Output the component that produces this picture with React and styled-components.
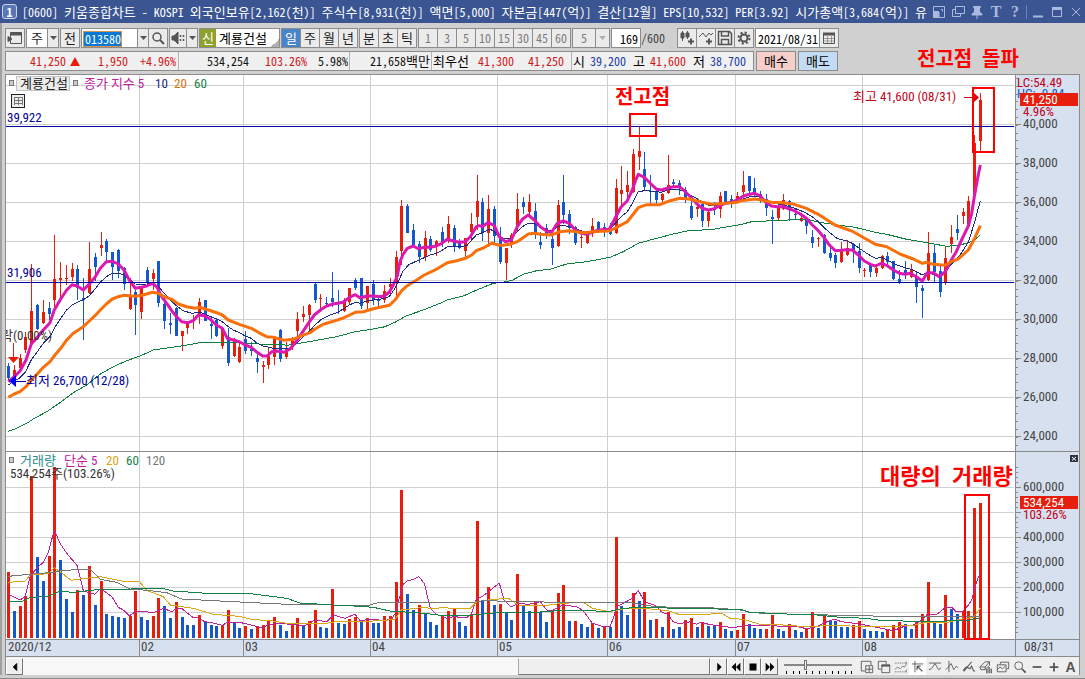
import React from 'react';
import styled, { createGlobalStyle } from 'styled-components';

const RED = '#e81e0c';
const BLUE = '#1458cc';

const FIRST_X = 7;
const STEP = 972 / 168;

// kind, high, body top, body bottom, low (thirds of a unit under `base`)
const candleRuns = [
  {
    base: 200,
    rows: `B490,498,534,540 R496,510,532,540 R462,475,505,515 R395,410,450,460 R192,333,430,440 B312,315,388,390
      R300,337,368,372 B305,325,342,360 R105,238,300,325 R186,234,240,305 R195,234,238,255 R190,207,230,242
      B195,207,265,300 B235,294,300,420 R125,208,280,282 B160,171,200,242 R97,135,143,167 B118,123,155,185
      B155,157,200,240 B147,149,212,235 B200,205,253,270 R235,285,328,330 B270,276,316,405 R258,260,337,358
      B200,210,247,255 R208,218,236,270 B183,184,308,322 B285,313,362,388 B340,370,374,402 B322,324,407,408
      R392,393,408,452 R365,368,383,402 R345,360,363,388 R295,305,345,372 B300,301,362,362 B352,373,377,417
      B357,360,408,410 R380,385,437,447 B385,412,488,497 R413,417,467,470 R430,440,487,488 B393,417,452,463
      B425,448,454,467 B455,473,487,518 R483,495,500,550`,
  },
  {
    base: 160,
    rows: `R562,587,615,626 R530,538,590,614 B507,510,597,605 R545,563,590,597 R530,535,560,570 R457,478,512,540
      R438,462,470,485 R432,435,465,515 B368,372,420,428 R402,413,417,447 B411,428,431,442 B336,415,426,440
      B390,425,430,462 R415,420,452,456 R384,385,427,433 B354,360,385,390 B354,355,437,448 R377,378,428,457
      B361,373,420,435 B415,418,424,447 R375,393,420,430 R354,372,382,408 R273,290,370,412 R121,138,272,316
      B133,138,218,218 B192,210,256,262 B243,252,290,310 R213,234,290,303 B228,236,270,276 R240,243,256,287
      B200,216,245,262 R168,192,243,250 B195,205,262,275 B237,247,265,267 R233,235,272,290 R158,192,215,240
      R45,123,170,210 B115,126,218,242 R104,147,218,260 B139,147,227,250 B201,235,305,311`,
  },
  {
    base: 80,
    rows: `R503,505,548,600 R460,465,490,503 R339,387,440,455 B350,366,381,402 R342,366,395,405 B369,393,462,476
      B455,487,494,508 B433,444,463,478 B455,477,503,555 R361,375,498,502 B285,366,405,432 B390,402,443,462
      B437,441,490,494 R460,470,473,503 R455,458,490,492 R414,438,458,470 B423,427,448,450 B430,440,455,470
      B430,437,462,465 R297,324,460,462 R258,330,342,375 R273,315,335,365 R207,222,335,340 R140,213,231,270
      B216,267,320,332 B285,333,336,375 B330,333,360,378 R340,343,360,365 R225,315,340,342 B297,306,312,322
      B300,309,325,345 B320,330,355,368 B360,378,414,420 R370,382,386,410 B370,372,423,440 R390,396,423,440
      B366,385,390,405 R336,348,387,413 B332,334,370,372 B345,358,364,385 R336,348,365,370 R273,315,337,350
      B288,289,333,345 B294,324,340,350 B333,342,362,370 B343,357,383,408 B390,411,416,491 R370,385,413,423
      R342,360,387,390 B360,363,390,422 B385,402,406,420 R400,414,423,426 B410,420,437,463 B450,471,488,503
      R470,475,478,502 B462,465,520,523 B491,519,534,543 B518,525,548,563 R486,514,545,550 R480,505,525,528
      B490,492,510,548 B490,513,563,578 R563,571,574,590 B550,552,577,590 R558,564,578,590 R525,527,563,567
      B517,528,545,562 B543,544,598,600 B570,598,606,612 B543,570,586,597 R552,567,590,593 B573,590,620,668
      B615,624,632,713 R457,520,600,602 B495,520,575,607 B555,573,635,650 R502,535,605,614 R435,470,492,518
      B405,447,460,480 R384,397,408,432 R348,363,432,435 R165,190,342,350 R40,60,182,213`,
  },
];

const volumeRows = `R381 B498 R483 R453 R93 B336 B408 R333 R66 B345 B462 B501 R435 B450 R363 B480 R408 B507 B513 B516 B519
  R514 R438 B516 B525 R514 R459 B483 B519 R471 B516 B540 B540 R510 B531 B540 B543 R540 R495 B534 B549 R543 B552 R543
  R540 R528 R516 B540 B558 R537 R519 B543 R528 R495 B546 B549 R432 B534 B537 R522 R516 B528 R519 B534 B534 R513 R513
  R411 R135 B447 B495 R480 B504 B531 B540 R514 R498 R490 B531 B543 R507 R228 B465 R426 B480 R477 B504 B525 R387 B480
  B498 R474 B501 B531 R495 R444 R420 B528 R528 B537 B546 R534 B549 R543 B546 R276 B483 B510 R444 B468 R441 B525 R522
  B546 R501 B552 B546 R525 R519 B546 R531 B543 B543 R531 B552 B558 R555 R507 B537 B549 B552 R552 R510 B552 B558 R537
  B555 B561 R549 R501 B549 R514 B528 B528 B546 B546 R540 R528 B552 B558 B558 B561 R552 R540 R531 B537 B552 R531 R507
  R411 B531 B537 R450 B492 B507 R498 R498 R189 R174`;

// [origin x, origin y, points in thirds of a unit]
const priceLines = [
  {
    color: '#108040',
    width: 1,
    runs: [
      [0, 200, '25,694 50,685 80,670 100,657 140,635 180,608 220,578 260,555 300,523 340,500 380,482 420,468 460,450 500,444 550,437 600,428 680,427 775,431'],
      [260, 160, '0,553 60,553 80,556 130,548 175,540 230,530 286,515 340,507 375,500 405,487 440,467 490,450 540,430 562,420 610,408 650,390 700,370 740,365'],
      [500, 80, '38,600 70,583 110,572 150,568 200,552 260,545 330,532 370,515 415,490 470,475 520,462 560,453 640,448 700,437'],
      [740, 80, '0,434 35,425 120,421 200,418 240,427 290,435 340,441 406,457 440,463 500,478 560,488 620,499 660,495 685,488 703,480 721,465'],
    ],
  },
  {
    color: '#1c2c86',
    width: 1,
    runs: [
      [0, 200, '25,555 40,545 58,535 75,518 94,480 112,455 130,430 150,410 163,385 182,355 200,330 216,315 235,305 250,300 268,287 285,267 301,247 319,230 337,219 355,220 372,225 388,238 406,252 424,253 440,252 457,250 475,260 493,280 511,300 530,318 550,332 575,340 600,337 625,347 650,357 667,365 685,380 700,390 718,398 736,408 754,415 769,428'],
      [260, 160, '8,558 20,560 40,565 60,566 90,564 110,550 130,530 150,512 165,495 185,477 205,467 230,458 250,447 268,435 286,427 301,430 325,422 360,418 388,410 405,385 415,365 428,335 445,315 470,303 493,293 511,285 529,280 545,272 562,260 590,260 620,257 635,240 649,225 670,217 690,207 703,215 718,230'],
      [500, 80, '16,477 34,475 52,455 67,440 85,430 103,430 121,440 139,448 154,453 172,440 190,436 208,440 226,447 259,457 300,450 328,448 346,430 364,410 382,395 397,370 415,335 433,332 451,333 484,337 502,330 530,328 553,333 571,345 589,355 607,367 625,375 650,378 676,373 712,363'],
      [740, 80, '30,350 60,350 90,367 130,375 160,383 190,395 217,410 235,425 260,450 290,475 320,483 337,490 355,503 380,520 406,535 425,533 442,540 470,555 495,563 520,570 547,585 562,577 598,590 616,575 634,553 660,525 685,487 703,430 721,362'],
    ],
  },
  {
    color: '#d919b0',
    width: 3,
    runs: [
      [0, 200, '25,545 43,530 60,513 78,480 94,432 112,412 130,390 150,368 163,330 182,297 200,270 216,254 232,258 250,270 268,252 285,232 301,205 319,185 337,184 355,192 372,210 388,240 406,265 424,262 440,258 457,250 470,260 485,290 500,310 515,332 530,350 545,365 565,368 580,362 595,345 613,347 631,358 649,375 667,385 682,415 700,420 718,425 736,435 754,442 769,455'],
      [260, 160, '8,588 22,588 35,575 50,573 72,577 90,567 108,545 125,520 145,490 163,465 185,447 200,438 215,433 232,430 250,427 268,412 286,404 301,414 320,408 340,408 360,410 375,407 388,396 400,375 412,348 420,305 428,285 442,265 460,258 475,266 493,262 511,262 529,258 545,250 562,238 580,243 598,247 616,245 631,230 649,200 658,197 667,200 685,187 703,197 718,230'],
      [500, 80, '16,485 34,480 52,440 67,418 85,405 103,420 121,440 139,452 154,458 172,430 190,423 208,430 226,450 241,458 259,463 277,457 295,450 328,448 340,425 350,405 364,380 382,362 397,330 407,300 415,283 433,292 451,310 469,327 484,330 502,325 520,320 538,320 553,332 571,350 589,370 607,385 625,390 640,387 658,378 676,370 694,367 712,360'],
      [740, 80, '7,350 20,345 43,340 60,347 76,365 94,378 112,380 130,380 148,387 163,392 181,402 199,415 217,435 235,452 250,470 268,495 286,512 304,511 319,509 337,510 355,525 373,543 391,553 406,558 424,550 442,557 460,570 478,580 495,583 511,580 529,590 547,603 562,578 580,578 598,590 616,575 634,540 649,515 667,475 685,438 695,400 703,350 712,300 721,255'],
    ],
  },
  {
    color: '#f96f0a',
    width: 3,
    runs: [
      [0, 200, '25,592 43,582 60,575 78,560 94,540 112,522 130,502 150,485 165,465 182,445 200,420 220,400 250,380 268,363 285,347 301,330 319,312 337,297 355,290 372,286 406,289 430,285 457,277 475,280 493,290 515,298 535,312 560,320 585,325 600,322 625,330 650,338 667,345 685,360 718,373 754,385 775,397'],
      [260, 160, '0,520 20,530 40,532 72,541 100,538 125,527 150,518 165,507 190,493 220,484 250,474 286,457 310,455 340,446 388,436 405,420 425,392 442,377 470,360 493,345 529,328 562,308 590,302 616,295 635,285 649,272 670,264 695,250 718,256'],
      [500, 80, '8,496 30,493 52,485 85,462 103,460 121,463 154,465 180,455 208,452 250,458 300,454 328,453 350,442 382,425 415,383 440,374 480,374 510,362 540,355 571,358 607,367 635,373 680,370 712,367'],
      [740, 80, '0,363 45,357 75,362 94,367 130,368 163,373 199,385 235,403 285,435 340,455 406,493 440,500 480,522 520,537 547,550 562,547 580,553 616,556 634,545 655,537 685,510 703,477 721,437'],
    ],
  },
];

const volumeLines = [
  {
    color: '#c0209c',
    width: 1,
    runs: [
      [0, 445, '25,448 45,457 60,465 75,455 90,395 110,370 130,352 145,322 163,255 180,295 200,325 232,362 250,437 268,443 285,448 301,432 320,443 337,457 355,487 370,495 388,513 406,500 424,498 460,503 490,490 515,500 530,490 545,490 560,503 580,518 595,517 613,530 631,532 667,541 682,532 718,532 754,540 785,548 805,540 836,535 870,538 915,542 945,525 980,530 1000,510 1035,520 1066,507'],
      [350, 445, '15,508 31,527 67,522 100,527 125,522 136,505 145,470 160,418 172,408 190,403 207,395 223,415 241,490 259,508 290,520 310,515 350,518 365,505 380,460 397,455 415,440 448,414 463,467 484,486 505,475 535,478 571,470 590,495 605,497 640,480 680,485 700,497 727,535 760,545 780,545 790,520 800,485 820,475 847,460 865,436 883,470 918,482 934,500 952,508 970,530 988,536 1021,530 1039,538'],
      [700, 445, '0,533 40,540 100,548 140,541 214,540 250,546 283,543 320,551 350,545 388,527 406,523 424,530 457,534 500,541 544,550 580,557 610,545 640,540 667,525 682,508 710,508 736,488 754,486 769,500 787,500 805,480 815,465 823,435 830,410 840,385'],
    ],
  },
  {
    color: '#dba514',
    width: 1,
    runs: [
      [0, 445, '25,412 75,409 90,390 145,386 163,368 180,380 214,406 232,403 301,395 370,409 418,409 440,436 490,455 511,480 580,490 640,508 718,514 754,523 820,528 860,535 980,535 1020,528'],
      [350, 445, '0,530 100,527 136,522 154,495 223,487 250,492 280,487 300,490 361,490 380,470 420,464 475,460 505,480 580,482 640,475 700,472 727,490 780,500 830,490 880,490 955,497 985,508'],
      [700, 445, '0,509 65,505 90,520 130,523 180,538 250,540 320,545 400,541 450,543 560,545 640,541 680,532 740,533 780,523 820,517 841,490'],
    ],
  },
  {
    color: '#777777',
    width: 1,
    runs: [
      [0, 445, '25,394 90,388 160,382 190,376 270,373 300,403 350,412 390,432 440,436 500,443 545,462 700,470 860,478 1000,480'],
      [350, 445, '0,480 60,480 80,474 360,473 400,467 530,470 700,473 850,474 890,482 960,487'],
      [700, 445, '0,487 60,490 130,496 150,503 260,507 420,511 560,514 841,514'],
    ],
  },
  {
    color: '#148246',
    width: 1,
    runs: [
      [0, 445, '25,470 70,468 90,457 140,455 180,439 220,442 300,433 380,433 420,430 495,432 520,438 620,445 760,447 860,460 900,474 1000,480'],
      [350, 445, '0,482 70,487 120,498 223,505 280,512 370,510 430,504 540,503 640,496 780,499 820,490 880,487 980,490'],
      [700, 445, '0,490 130,495 150,502 260,507 350,510 420,517 500,520 540,526 640,529 740,528 800,527 841,518'],
    ],
  },
];

const months = [
  [139, '02'],
  [243, '03'],
  [370, '04'],
  [497, '05'],
  [607, '06'],
  [735, '07'],
  [862, '08'],
];

const candles = candleRuns.flatMap(({ base, rows }) =>
  rows.trim().split(/\s+/).map((row) => ({
    up: row[0] === 'R',
    y: row.slice(1).split(',').map((v) => Math.round(base + v / 3)),
  }))
);

const volumes = volumeRows.trim().split(/\s+/).map((row) => ({
  up: row[0] === 'R',
  y: Math.round(445 + row.slice(1) / 3),
}));

const barX = (i) => Math.round(FIRST_X + STEP * i);

const toPoints = (runs) =>
  runs
    .flatMap(([x0, y0, pts]) =>
      pts.split(' ').map((p) => {
        const [x, y] = p.split(',');
        return `${(x0 + x / 3).toFixed(1)},${(y0 + y / 3).toFixed(1)}`;
      })
    )
    .join(' ');

const range = (n) => Array.from({ length: n }, (_, i) => i);

function Averages({ lines }) {
  return lines.map((line) => (
    <polyline
      key={line.color}
      points={toPoints(line.runs)}
      fill="none"
      stroke={line.color}
      strokeWidth={line.width}
      strokeLinejoin="round"
      shapeRendering={line.width === 1 ? 'crispEdges' : 'auto'}
    />
  ));
}

function MonthLines({ y1, y2 }) {
  return months.map(([x]) => <GridLine key={x} x1={x + 0.5} x2={x + 0.5} y1={y1} y2={y2} />);
}

function PriceChart() {
  return (
    <ChartSvg viewBox="6 75 1073 376" role="img" aria-label="계룡건설 일봉">
      <rect x="6" y="75" width="1009" height="376" fill="#fff" />
      <rect x="1015" y="75" width="64" height="376" fill="#d6e0ef" />
      {range(10).map((i) => (
        <GridLine key={i} x1="6" x2="1014" y1={85.5 + 39 * i} y2={85.5 + 39 * i} />
      ))}
      <MonthLines y1={75} y2={451} />

      {candles.map(({ up, y: [high, top, bottom, low] }, i) => (
        <g key={i} fill={up ? RED : BLUE} shapeRendering="crispEdges">
          <rect x={barX(i) + 1} y={high} width="1" height={low - high} />
          <rect x={barX(i)} y={top} width="3" height={Math.max(1, bottom - top)} />
        </g>
      ))}
      <Averages lines={priceLines} />

      <Level x1="6" x2="1014" y1="126.5" y2="126.5" />
      <Level x1="6" x2="1014" y1="282.5" y2="282.5" />
      <Label x="7" y="122" fill="#0000a0">39,922</Label>
      <Label x="7" y="277" fill="#0000a0">31,906</Label>

      <svg x="6" y="325" width="60" height="20" viewBox="6 325 60 20">
        <Label x="1" y="340" fill="#333">락(0.00%)</Label>
      </svg>
      <path d="M13.5 343v15" stroke={RED} />
      <path d="M8 357h11l-5.500 6z" fill={RED} />
      <path d="M9 381l7-6v12z" fill="#0000f0" />
      <path d="M16 381.500h10" stroke="#0000a0" />
      <Label x="26" y="385" fill="#0000a0">최저 26,700 (12/28)</Label>

      <Label x="853" y="101" fill="#c00020">최고 41,600 (08/31)</Label>
      <path d="M964 97.500h9" stroke="#c00020" />
      <path d="M973 92v11l6-5.500z" fill="#e00010" />

      <Marker x="9" y="80" />
      <rect x="16.500" y="76.500" width="53" height="14" fill="#ececec" stroke="#c4c4c4" />
      <Label x="20" y="88" fill="#222">계룡건설</Label>
      <Marker x="73" y="80" />
      <Label x="84" y="88" fill="#c0209c">종가 지수 5</Label>
      <Label x="155" y="88" fill="#14288c">10</Label>
      <Label x="174" y="88" fill="#e0700a">20</Label>
      <Label x="194" y="88" fill="#148246">60</Label>
      <g fill="none" stroke="#222" shapeRendering="crispEdges">
        <rect x="11.500" y="94.500" width="13" height="13" fill="#eee" />
        <path d="M14 97.500h8M14 100.500h8M14 103.500h8M14.500 97v8M18.500 97v8M22.500 97v8" stroke="#777" />
      </g>

      <AxisLine x1="1015.5" x2="1015.5" y1="75" y2="451" />
      {range(48).map((i) => (
        <AxisLine key={i} x1="1016" x2="1018" y1={Math.round(78 + 7.8 * i) + 0.5} y2={Math.round(78 + 7.8 * i) + 0.5} />
      ))}
      {range(9).map((i) => (
        <g key={i}>
          <AxisLine x1="1016" x2="1021" y1={124.5 + 39 * i} y2={124.5 + 39 * i} />
          <Label x="1023" y={128 + 39 * i} fill="#444">{`${40 - 2 * i},000`}</Label>
        </g>
      ))}
      <Label x="1017" y="87" fill="#c00020">LC:54.49</Label>
      <Label x="1017" y="98" fill="#1458cc">HC: -0.84</Label>
      <rect x="1020" y="93" width="58" height="13" fill={RED} />
      <Label x="1023" y="104" fill="#fff">41,250</Label>
      <Label x="1023" y="116" fill="#c00020">4.96%</Label>

      <Callout x="630" y="114" width="26" height="22" />
      <Callout x="973" y="88" width="21" height="64" />
      <Note x="615" y="104" $size={20}>전고점</Note>
      <Note x="917" y="66" $size={20}>전고점</Note>
      <Note x="982" y="66" $size={20}>돌파</Note>
    </ChartSvg>
  );
}

function VolumeChart() {
  return (
    <ChartSvg viewBox="6 451 1073 206" role="img" aria-label="거래량">
      <rect x="6" y="451" width="1009" height="188" fill="#fff" />
      <rect x="1015" y="451" width="64" height="188" fill="#d6e0ef" />
      <rect x="6" y="639" width="1073" height="18" fill="#d6e0ef" />
      {range(6).map((i) => (
        <GridLine key={i} x1="6" x2="1014" y1={487.5 + 25 * i} y2={487.5 + 25 * i} />
      ))}
      <MonthLines y1={452} y2={639} />
      {volumes.map(({ up, y }, i) => (
        <rect key={i} x={barX(i)} y={y} width="3" height={638 - y} fill={up ? RED : BLUE} shapeRendering="crispEdges" />
      ))}
      <Averages lines={volumeLines} />

      <Marker x="9" y="457" />
      <Label x="20" y="465" fill="#2a8c8c">거래량</Label>
      <Label x="64" y="465" fill="#c0209c">단순 5</Label>
      <Label x="106" y="465" fill="#dba514">20</Label>
      <Label x="126" y="465" fill="#148246">60</Label>
      <Label x="146" y="465" fill="#777">120</Label>
      <Label x="10" y="478" fill="#333">534,254주(103.26%)</Label>

      <AxisLine x1="6" x2="1079" y1="451.5" y2="451.5" />
      <AxisLine x1="1015.5" x2="1015.5" y1="451" y2="657" />
      {range(34).map((i) => (
        <AxisLine key={i} x1="1016" x2="1018" y1={467.5 + 5 * i} y2={467.5 + 5 * i} />
      ))}
      {[6, 5, 4, 3, 2, 1].map((n) => (
        <AxisLine key={n} x1="1016" x2="1021" y1={637.5 - 25 * n} y2={637.5 - 25 * n} />
      ))}
      {[6, 4, 3, 2, 1].map((n) => (
        <Label key={n} x="1023" y={641 - 25 * n} fill="#444">{`${n}00,000`}</Label>
      ))}
      <rect x="1020" y="496" width="58" height="13" fill={RED} />
      <Label x="1023" y="507" fill="#fff">534,254</Label>
      <Label x="1023" y="519" fill="#c00020">103.26%</Label>
      <rect x="1070" y="455" width="8" height="7" fill="#334" />
      <path d="M1072 457l4 3.500M1076 457l-4 3.500" stroke="#fff" />

      <AxisLine x1="6" x2="1079" y1="639.5" y2="639.5" />
      <AxisLine x1="6" x2="1079" y1="656.5" y2="656.5" />
      <Label x="8" y="651" fill="#444">2020/12</Label>
      {months.map(([x, name]) => (
        <g key={x}>
          <AxisLine x1={x + 0.5} x2={x + 0.5} y1="640" y2="656" />
          <Label x={x + 2} y="651" fill="#444">{name}</Label>
        </g>
      ))}
      <Label x="1024" y="651" fill="#444">08/31</Label>

      <Callout x="965" y="495" width="24" height="144" />
      <Note x="880" y="484" $size={22}>대량의</Note>
      <Note x="952" y="484" $size={22}>거래량</Note>
    </ChartSvg>
  );
}

function Icon({ children, size = 16, fill = 'none', label }) {
  return (
    <svg width={size} height={size} viewBox="0 0 16 16" fill={fill} stroke="currentColor" aria-label={label}>
      {children}
    </svg>
  );
}

// Hangul is set one size up so that a syllable takes two digits
function Mixed({ text }) {
  return text.split(/([가-힣]+)/).map((part, i) => (i % 2 ? <Hangul key={i}>{part}</Hangul> : part));
}

function Arrow({ dim }) {
  return (
    <ArrowButton type="button" aria-label="열기" $dim={dim}>
      <svg width="7" height="4" viewBox="0 0 7 4"><path d="M0 0h7l-3.500 4z" fill="currentColor" /></svg>
    </ArrowButton>
  );
}

const title =
  '[0600] 키움종합차트 - KOSPI 외국인보유[2,162(천)] 주식수[8,931(천)] 액면[5,000] 자본금[447(억)] 결산[12월] EPS[10,532] PER[3.92] 시가총액[3,684(억)] 유';

function TitleBar() {
  return (
    <TitleBarBox>
      <TitleBadge>1</TitleBadge>
      <TitleText><Mixed text={title} /></TitleText>
      <WindowTools>
        <TitleButton aria-label="도킹"><Icon><path d="M2.500 2.500h11v11h-11z" /><path d="M2.500 7.500h5v6M10 5.500h1.500v2" /><path d="M3 8h5v5H3z" fill="currentColor" /></Icon></TitleButton>
        <TitleButton aria-label="복제"><Icon><path d="M5.500 2.500h9v7h-9zM5 5.500H2.500v7h8V10" /></Icon></TitleButton>
        <TitleButton aria-label="고정"><Icon fill="currentColor"><path d="M4.500 2.500h7v1l-1 .5v4l2.500 2v1H3v-1l2.500-2V4l-1-.5zM8 11v4" /></Icon></TitleButton>
        <TitleButton aria-label="글꼴"><TitleGlyph>T</TitleGlyph></TitleButton>
        <TitleButton aria-label="도움말"><TitleGlyph>?</TitleGlyph></TitleButton>
        <TitleDivider />
        <TitleButton aria-label="최소화"><Icon><path d="M3 12.500h10" strokeWidth="2" /></Icon></TitleButton>
        <TitleButton aria-label="최대화"><Icon><path d="M3.500 4.500h9v8h-9z" /><path d="M3 4.500h10" strokeWidth="3" /></Icon></TitleButton>
        <TitleButton aria-label="닫기"><Icon><path d="M4 4l8 8M12 4l-8 8" /></Icon></TitleButton>
      </WindowTools>
    </TitleBarBox>
  );
}

function Toolbar() {
  return (
    <ToolbarRow>
      <ToolButton type="button" aria-label="패널" $width={20}>
        <Icon><path d="M3.500 2.500h11v11h-11z" /><path d="M3 4h12" strokeWidth="3" /><path d="M1 6.500v5l4-2.500z" fill="currentColor" /></Icon>
      </ToolButton>
      <Group>
        <ToolButton type="button" $width={22} $plain>주</ToolButton>
        <Arrow />
      </Group>
      <ToolButton type="button" $width={20}>전</ToolButton>
      <Group>
        <CodeField>
          <CodeInput aria-label="종목코드" defaultValue="013580" />
        </CodeField>
        <Arrow />
        <ToolButton type="button" aria-label="검색" $width={20}>
          <Icon><circle cx="7" cy="7" r="4" strokeWidth="1.500" /><path d="M10 10l4 4" strokeWidth="2" /></Icon>
        </ToolButton>
      </Group>
      <Group>
        <ToolButton type="button" aria-label="소리" $width={18}>
          <Icon><path d="M2 6h2l4-4v12l-4-4H2z" fill="currentColor" /><path d="M10.500 5v6M13.500 5v6" strokeDasharray="2 2" strokeWidth="1.500" /></Icon>
        </ToolButton>
        <Arrow />
      </Group>
      <StockName>
        <StockTag>신</StockTag>
        계룡건설
      </StockName>
      <Group>
        {['일', '주', '월', '년'].map((t) => (
          <ToolButton key={t} type="button" $width={20} $active={t === '일'}>{t}</ToolButton>
        ))}
      </Group>
      <Group>
        {['분', '초', '틱'].map((t) => (
          <ToolButton key={t} type="button" $width={20}>{t}</ToolButton>
        ))}
      </Group>
      <Group>
        {[1, 3, 5, 10, 15, 30, 45, 60].map((n) => (
          <ToolButton key={n} type="button" $width={20} $dim>{n}</ToolButton>
        ))}
      </Group>
      <Group>
        <ToolButton type="button" $width={24} $dim>5</ToolButton>
        <Arrow dim />
      </Group>
      <Count>
        <CountInput aria-label="표시 개수" defaultValue="169" />
        <span>/600</span>
      </Count>
      <Group>
        <ToolButton type="button" aria-label="봉 추가" $width={20}>
          <Icon><path d="M3.500 1v10M8.500 1v8" /><path d="M2 3h3v5H2zM7 3h3v4H7z" fill="currentColor" /><path d="M9 11.500h6M12 8.500v6" strokeWidth="2" /></Icon>
        </ToolButton>
        <ToolButton type="button" aria-label="지표 추가" $width={20}>
          <Icon><path d="M1 7l4-4 3 4 3-4 2 2 2-2" /><path d="M8 11.500h6M11 8.500v6" strokeWidth="2" /></Icon>
        </ToolButton>
        <ToolButton type="button" aria-label="저장" $width={20}>
          <Icon><path d="M1.500 1.500h11l2 2v11h-13zM4.500 2v4h7V2M4.500 14.500v-5h7v5" strokeWidth="1.500" /></Icon>
        </ToolButton>
        <ToolButton type="button" aria-label="설정" $width={20}>
          <Icon><circle cx="8" cy="8" r="3.500" strokeWidth="2" /><circle cx="8" cy="8" r="5.500" strokeWidth="2" strokeDasharray="2.160 2.160" /></Icon>
        </ToolButton>
      </Group>
      <Group>
        <DateInput aria-label="날짜" defaultValue="2021/08/31" />
        <ToolButton type="button" aria-label="달력" $width={20}>
          <Icon><path d="M2.500 3.500h11v10h-11z" /><path d="M2 4h12" strokeWidth="3" /><path d="M3 8.500h10M3 11h10M6.500 6v7M10.500 6v7" strokeWidth=".5" /></Icon>
        </ToolButton>
      </Group>
    </ToolbarRow>
  );
}

function Quotes() {
  return (
    <QuoteRow>
      <QuoteBox>
        <QuoteCell $width={172}>
          <Value $tone="up" $width={60}>41,250</Value>
          <UpMark viewBox="0 0 10 9"><path d="M5 0l5 9H0z" fill={RED} /></UpMark>
          <Value $tone="up" $width={48}>1,950</Value>
          <Value $tone="up" $width={48}>+4.96%</Value>
        </QuoteCell>
        <QuoteCell $width={171}>
          <Value $width={70}>534,254</Value>
          <Value $tone="up" $width={58}>103.26%</Value>
          <Value $width={41}>5.98%</Value>
        </QuoteCell>
        <QuoteCell $width={82}>
          <Value $width={80}><Mixed text="21,658백만" /></Value>
        </QuoteCell>
        <QuoteCell $width={140}>
          <Caption>최우선</Caption>
          <Value $tone="up" $width={44}>41,300</Value>
          <Value $tone="up" $width={50}>41,250</Value>
        </QuoteCell>
        <QuoteCell $width={182}>
          <Caption>시</Caption>
          <Value $tone="down" $width={40}>39,200</Value>
          <CaptionWide>고</CaptionWide>
          <Value $tone="up" $width={40}>41,600</Value>
          <CaptionWide>저</CaptionWide>
          <Value $tone="down" $width={40}>38,700</Value>
        </QuoteCell>
      </QuoteBox>
      <TradeButton type="button" $color="#f6cfcb">매수</TradeButton>
      <TradeButton type="button" $color="#c3dcf4">매도</TradeButton>
    </QuoteRow>
  );
}

const chartTools = [
  ['창 추가', <><path d="M12.500 6V1.500h-11v11H6" /><path d="M6.500 6.500h8v8h-8zM10.500 7v7M7 10.500h7" /></>],
  ['창 겹치기', <><path d="M5 10.500H1.500v-9h9V5" /><path d="M5.500 5.500h9v9h-9z" /><path d="M5 6.500h10" strokeWidth="2" /></>],
  ['추세선', <><path d="M1 3.500h13M1 13.500h13" strokeDasharray="1 1" /><path d="M1 11l3-3 3 2 3-3 2 1 2-3M14 2v3M14 11v3" strokeWidth=".8" /></>],
  ['십자선', <><path d="M1 4.500h13M4.500 1v13" /><path d="M7 7l6 6M7 7h4M7 7v4" strokeWidth="1.500" /></>],
  ['수평선', <path d="M1 3.500h14M1 11l3-1 4-6 4 7 3-2" />],
  ['수직선', <path d="M4.500 1v13M1 11l3-3 3-4 3 7 3-4 2 2" />],
  ['사선', <path d="M2 13L11 2M1 12l4-4 4 2 2-3 2 5 2 1" strokeWidth="1.200" />],
  ['지우개', <><path d="M1 8l6-6h5v4l-5 5H2zM1 8h6l5-6M7 8v3" /><path d="M9 10v5M11.500 8v7M14 10v5" strokeWidth="1.500" /></>],
  ['그림 저장', <><path d="M5 5V2.500h9.500V10H12" /><path d="M1.500 5.500h10v8h-10zM1.500 11l3-3 3 2 3-3" /></>],
  ['돋보기', <><circle cx="6.500" cy="6.500" r="4.500" /><path d="M10 10l4.500 4.500" strokeWidth="2" /></>],
  ['축소', <path d="M3 8h10" strokeWidth="2" />],
  ['확대', <path d="M3 8h10M8 3v10" strokeWidth="2" />],
];

const transport = [
  ['재생', 'M6 3l5 5-5 5z'],
  ['뒤로', 'M8 3v10L3 8zM13 3v10L8 8z'],
  ['정지', 'M4 4h8v8H4z'],
  ['앞으로', 'M3 3v10l5-5zM8 3v10l5-5z'],
];

function BottomBar() {
  return (
    <BottomRow>
      <RaisedButton type="button" aria-label="왼쪽"><Icon size={14} fill="#000"><path d="M10 4v8L6 8z" /></Icon></RaisedButton>
      <ScrollTrack><ScrollThumb /></ScrollTrack>
      {transport.map(([name, d]) => (
        <RaisedButton key={name} type="button" aria-label={name}><Icon size={14} fill="#000"><path d={d} stroke="none" /></Icon></RaisedButton>
      ))}
      <ZoomSlider>
        <SliderInput type="range" aria-label="배율" min="0" max="10" step="1" defaultValue="3" />
        <svg width="68" height="3">
          {range(11).map((i) => <rect key={i} x={2 + Math.round(6.500 * i)} y="0" width="1" height="3" fill="#000" />)}
        </svg>
      </ZoomSlider>
      <ChartTools>
        {chartTools.map(([name, drawing]) => (
          <ChartTool key={name} type="button" aria-label={name} $active={name === '십자선'}><Icon size={14}>{drawing}</Icon></ChartTool>
        ))}
        <ChartTool type="button">A</ChartTool>
      </ChartTools>
    </BottomRow>
  );
}

function App() {
  return (
    <>
      <GlobalStyle />
      <Window>
        <TitleBar />
        <Body>
          <Toolbar />
          <Quotes />
          <ChartFrame>
            <PriceChart />
            <VolumeChart />
            <BottomBar />
          </ChartFrame>
        </Body>
      </Window>
    </>
  );
}

export default App;

const GlobalStyle = createGlobalStyle`
  * {
    box-sizing: border-box;
  }
  body {
    margin: 0;
    background: #d0d0d0;
  }
  body, button, input {
    font-family: 'Noto Sans Mono CJK KR', 'Noto Sans CJK KR', sans-serif;
    font-size: 12px;
    line-height: 18px;
  }
  button, input {
    margin: 0;
    padding: 0;
    border: 0;
  }
`;

const Window = styled.div`
  min-height: 100vh;
  background: #d0d0d0;
  border-bottom: 1px solid #8a8a8a;
`;

const Hangul = styled.span`
  font-size: 13px;
`;

const TitleBarBox = styled.header`
  display: flex;
  align-items: center;
  height: 23px;
  padding: 0 1px 0 2px;
  background: #3a5592;
  color: #fff;
`;

const TitleBadge = styled.span`
  flex: none;
  width: 15px;
  height: 15px;
  margin-right: 5px;
  border: 1px solid #c8d4ec;
  border-radius: 3px;
  background: #5a76b4;
  font-weight: bold;
  line-height: 13px;
  text-align: center;
`;

const TitleText = styled.h1`
  flex: 1;
  margin: 0;
  overflow: hidden;
  font-size: 12px;
  font-weight: normal;
  white-space: nowrap;
`;

const WindowTools = styled.div`
  display: flex;
  align-items: center;
  gap: 3px;
`;

const TitleButton = styled.button`
  display: flex;
  align-items: center;
  justify-content: center;
  width: 16px;
  height: 16px;
  background: none;
  color: #a9bade;
`;

const TitleGlyph = styled.span`
  font: bold 16px 'Liberation Serif', serif;
`;

const TitleDivider = styled.span`
  width: 1px;
  height: 14px;
  background: #6d84b5;
`;

const Body = styled.main`
  padding: 5px 5px 0 3px;
  border-left: 2px solid #a0a0a0;
`;

const ToolbarRow = styled.div`
  display: flex;
  gap: 1px;
  height: 20px;
  white-space: nowrap;
`;

const Group = styled.div`
  display: flex;

  > * + * {
    margin-left: -1px;
  }
`;

const ToolButton = styled.button`
  display: flex;
  align-items: center;
  justify-content: center;
  flex: none;
  width: ${(p) => p.$width}px;
  height: 20px;
  border: 1px solid #8c8c8c;
  background: ${(p) => (p.$active ? '#4a84c8' : p.$plain ? '#fff' : '#ebebeb')};
  color: ${(p) => (p.$active ? '#fff' : p.$dim ? '#7c7c7c' : '#222')};
  font-size: ${(p) => (p.$dim ? 12 : 13)}px;

  svg {
    color: #555;
  }
`;

const ArrowButton = styled.button`
  display: flex;
  align-items: center;
  justify-content: center;
  flex: none;
  width: ${(p) => (p.$dim ? 15 : 12)}px;
  height: 20px;
  border: 1px solid #8c8c8c;
  background: #ebebeb;
  color: ${(p) => (p.$dim ? '#b0b0b0' : '#555')};
`;

const CodeField = styled.div`
  width: 57px;
  height: 20px;
  padding: 1px;
  border: 1px solid #8c8c8c;
  background: #fff;
`;

const CodeInput = styled.input`
  width: 39px;
  height: 16px;
  padding-left: 1px;
  border: 1px solid #d89050;
  background: #0a78d6;
  color: #fff;
`;

const StockName = styled.div`
  display: flex;
  align-items: center;
  width: 81px;
  height: 20px;
  border: 1px solid #8c8c8c;
  background: linear-gradient(135deg, transparent 50%, #b0b0b0 50%) right bottom / 8px 8px no-repeat #fff;
  font-size: 13px;
`;

const StockTag = styled.span`
  width: 16px;
  margin-right: 3px;
  background: #8fa02c;
  color: #fff;
  text-align: center;
`;

const Count = styled.label`
  display: flex;
  width: 65px;
  line-height: 20px;
  color: #444;
`;

const CountInput = styled.input`
  width: 30px;
  height: 20px;
  padding-right: 2px;
  border: 1px solid #8c8c8c;
  background: #fff;
  text-align: right;
`;

const DateInput = styled.input`
  width: 65px;
  height: 20px;
  padding-left: 2px;
  border: 1px solid #8c8c8c;
  background: #fff;
`;

const QuoteRow = styled.div`
  display: flex;
  gap: 2px;
  margin-top: 3px;
`;

const QuoteBox = styled.div`
  display: flex;
  height: 20px;
  border: 1px solid #8c8c8c;
  background: #f0f0f0;
  white-space: nowrap;
`;

const QuoteCell = styled.div`
  display: flex;
  align-items: center;
  width: ${(p) => p.$width}px;

  & + & {
    border-left: 1px solid #b4b4b4;
  }
`;

const Value = styled.span`
  width: ${(p) => p.$width}px;
  color: ${(p) => (p.$tone === 'up' ? '#d01818' : p.$tone === 'down' ? '#2040a8' : '#111')};
  text-align: right;
`;

const Caption = styled.span`
  margin-left: 1px;
  margin-right: 1px;
  font-size: 13px;
`;

const CaptionWide = styled(Caption)`
  margin-left: 7px;
`;

const UpMark = styled.svg`
  width: 10px;
  height: 9px;
  margin-left: 4px;
`;

const TradeButton = styled.button`
  width: 40px;
  height: 20px;
  border: 1px solid #8c8c8c;
  background: ${(p) => p.$color};
  font-size: 13px;
`;

const ChartFrame = styled.section`
  margin-top: 3px;
  border: 1px solid #8c8c8c;
  border-bottom: 0;
  background: #efefef;
`;

const ChartSvg = styled.svg`
  display: block;
  position: relative;
  width: 100%;
  height: auto;
  overflow: visible;
`;

const Label = styled.text`
  font-family: 'Roboto Condensed', Roboto, 'Noto Sans CJK KR', sans-serif;
  font-size: 13px;
`;

const Note = styled.text`
  fill: #f00;
  font-family: 'Noto Sans CJK KR', sans-serif;
  font-size: ${(p) => p.$size}px;
  font-weight: 700;
`;

const GridLine = styled.line`
  stroke: #d0d0d0;
  shape-rendering: crispEdges;
`;

const Level = styled.line`
  stroke: #0000a0;
  shape-rendering: crispEdges;
`;

const AxisLine = styled.line`
  stroke: #8a8a8a;
  shape-rendering: crispEdges;
`;

const Marker = styled.rect`
  width: 4px;
  height: 5px;
  fill: #ccc;
  stroke: #777;
  shape-rendering: crispEdges;
`;

const Callout = styled.rect`
  fill: none;
  stroke: #f00;
  stroke-width: 2;
  shape-rendering: crispEdges;
`;

const BottomRow = styled.footer`
  display: flex;
  align-items: center;
  height: 18px;
  padding-top: 1px;
`;

const RaisedButton = styled.button`
  display: flex;
  align-items: center;
  justify-content: center;
  flex: none;
  width: 17px;
  height: 17px;
  border: 1px solid;
  border-color: #fff #777 #777 #fff;
  background: #efefef;
`;

const ScrollTrack = styled.div`
  flex: 1;
  display: flex;
  justify-content: flex-end;
  height: 17px;
  background: #f8f8f8;
`;

const ScrollThumb = styled.div`
  width: 28%;
  height: 17px;
  border: 1px solid;
  border-color: #fff #777 #777 #aaa;
  background: #efefef;
`;

const ZoomSlider = styled.div`
  display: flex;
  flex-direction: column;
  width: 70px;
  height: 17px;
  margin: 0 4px 0 6px;
`;

const SliderInput = styled.input`
  appearance: none;
  width: 68px;
  height: 13px;
  background: linear-gradient(#888, #888) center / 100% 2px no-repeat;

  &::-webkit-slider-thumb {
    appearance: none;
    width: 3px;
    height: 10px;
    border: 1px solid #777;
    background: #eee;
  }
`;

const ChartTools = styled.div`
  display: flex;
`;

const ChartTool = styled.button`
  display: flex;
  align-items: center;
  justify-content: center;
  width: 17px;
  height: 17px;
  background: ${(p) => (p.$active ? '#fff' : 'none')};
  color: #555;
  font: bold 14px 'Liberation Sans', sans-serif;
`;
